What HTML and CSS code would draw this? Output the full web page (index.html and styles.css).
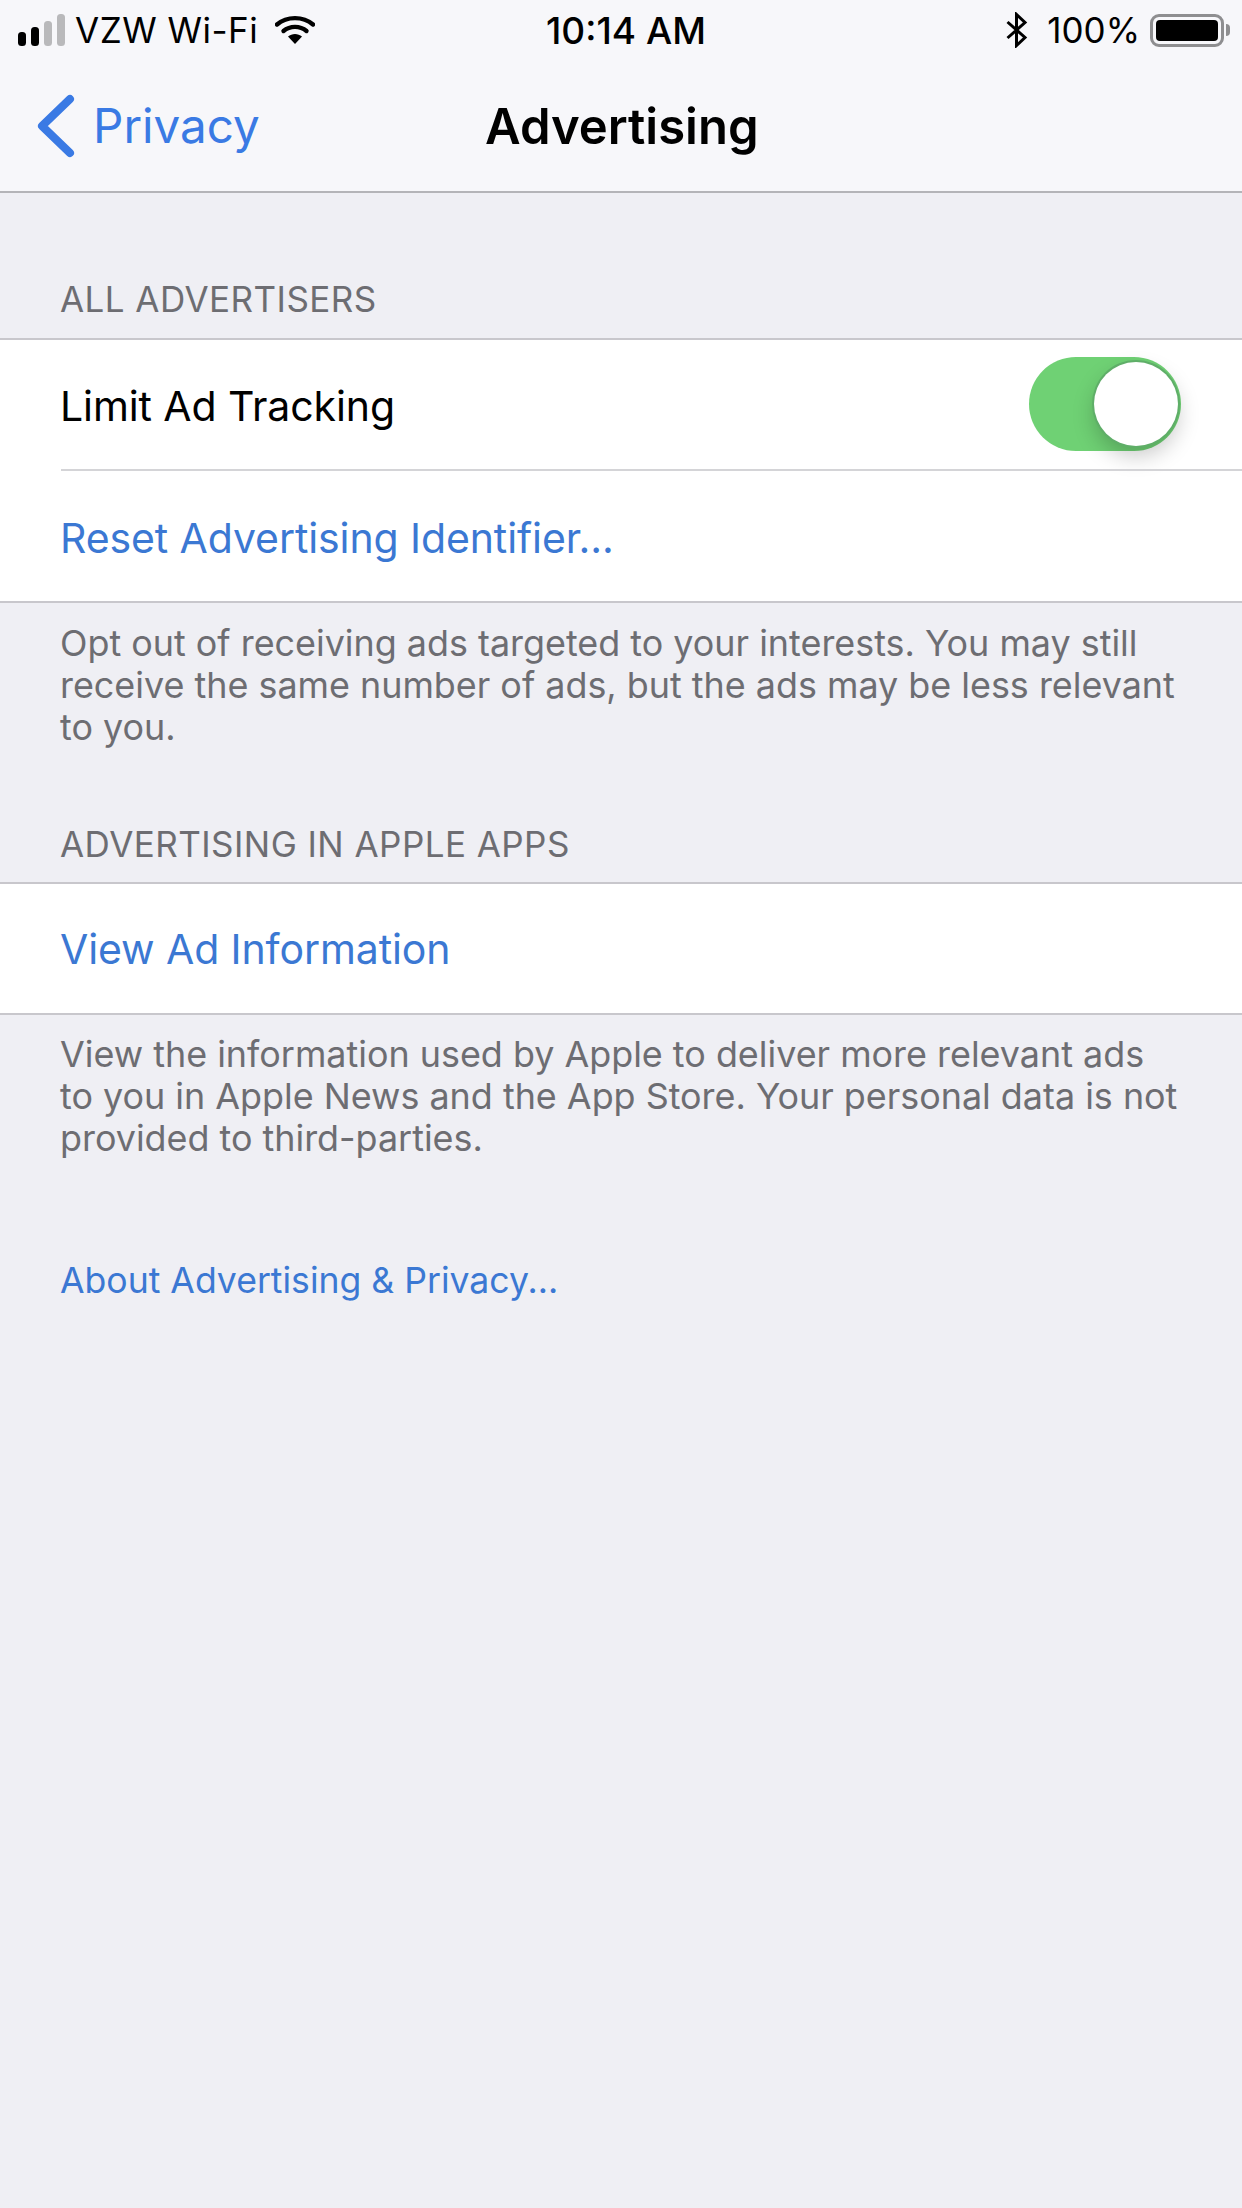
FILE: index.html
```html
<!DOCTYPE html>
<html lang="en">
<head>
<meta charset="utf-8">
<title>Advertising</title>
<link rel="stylesheet" href="styles.css">
</head>
<body>
<div class="phone">
  <header class="topbar">
    <div class="status">
      <div class="status-left">
        <svg class="signal" width="50" height="32" viewBox="0 0 50 32">
          <rect x="0" y="18" width="8" height="14" rx="3.5" fill="#000"/>
          <rect x="13" y="13" width="8" height="19" rx="3.5" fill="#000"/>
          <rect x="26" y="7" width="8" height="25" rx="3.5" fill="#b9b9bb"/>
          <rect x="39" y="0" width="8" height="32" rx="3.5" fill="#b9b9bb"/>
        </svg>
        <span class="carrier">VZW Wi-Fi</span>
        <svg class="wifi" width="40" height="30" viewBox="0 0 40 30">
          <path d="M2 9.500C12 1 28 1 38 9.500" fill="none" stroke="#000" stroke-width="4.400" stroke-linecap="round"/>
          <path d="M8.500 16C15 10.500 25 10.500 31.500 16" fill="none" stroke="#000" stroke-width="4.400" stroke-linecap="round"/>
          <path d="M13 21.500C17 18 23 18 27 21.500L20 29Z" fill="#000"/>
        </svg>
      </div>
      <div class="time">10:14 AM</div>
      <div class="status-right">
        <svg class="bt" width="24" height="36" viewBox="0 0 24 36">
          <path d="M2.500 10L20 25.500L11.500 33.500V2.500L20 10.500L2.500 26" fill="none" stroke="#000" stroke-width="3"/>
        </svg>
        <span class="pct">100%</span>
        <span class="battery"><span class="battery-fill"></span></span>
        <span class="battery-tip"></span>
      </div>
    </div>
    <nav class="navbar">
      <div class="back">
        <svg width="40" height="64" viewBox="0 0 40 64">
          <path d="M34 5L6 32L34 59" fill="none" stroke="#3a7ae4" stroke-width="8" stroke-linecap="round" stroke-linejoin="round"/>
        </svg>
        <span class="back-label">Privacy</span>
      </div>
      <h1 class="title">Advertising</h1>
    </nav>
  </header>
  <main class="content">
    <h2 class="section-head first">ALL ADVERTISERS</h2>
    <section class="group">
      <div class="row row-toggle">
        <span class="row-label">Limit Ad Tracking</span>
        <span class="toggle"><span class="knob"></span></span>
      </div>
      <div class="row link-row"><span class="row-label link">Reset Advertising Identifier...</span></div>
    </section>
    <p class="foot">Opt out of receiving ads targeted to your interests. You may still receive the same number of ads, but the ads may be less relevant to you.</p>
    <h2 class="section-head second">ADVERTISING IN APPLE APPS</h2>
    <section class="group">
      <div class="row view-row"><span class="row-label link">View Ad Information</span></div>
    </section>
    <p class="foot foot-second">View the information used by Apple to deliver more relevant ads to you in Apple News and the App Store. Your personal data is not provided to third-parties.</p>
    <p class="about">About Advertising &amp; Privacy...</p>
  </main>
</div>
</body>
</html>
```
FILE: styles.css
```css
* { box-sizing: border-box; }
html, body { margin: 0; padding: 0; }
body { font-family: Inter, "Liberation Sans", sans-serif; background: #efeff4; color: #000; }
.phone { width: 1242px; height: 2208px; overflow: hidden; background: #efeff4; display: flex; flex-direction: column; }

.topbar { background: #f7f7fa; border-bottom: 2px solid #b4b4b8; height: 193px; }
.status { height: 60px; display: flex; justify-content: space-between; align-items: center; position: relative; padding: 0 12px 0 18px; }
.status-left, .status-right { display: flex; align-items: center; }
.carrier { font-size: 35px; letter-spacing: 0.5px; margin-left: 7px; }
.wifi { margin-left: 17px; }
.time { position: absolute; left: 546px; font-size: 37px; font-weight: 500; }
.bt { margin-right: 18px; }
.pct { font-size: 35px; margin-right: 10px; letter-spacing: 0; }
.battery { width: 74px; height: 33px; border: 3px solid #8e8e90; border-radius: 9px; padding: 3px; display: block; }
.battery-fill { display: block; height: 100%; background: #000; border-radius: 4px; }
.battery-tip { width: 4px; height: 12px; background: #8e8e90; border-radius: 0 4px 4px 0; margin-left: 2px; }

.navbar { height: 131px; display: flex; align-items: center; position: relative; padding-left: 36px; }
.back { display: flex; align-items: center; gap: 17px; color: #3a7ae4; }
.back-label { font-size: 47.6px; }
.title { position: absolute; left: 485px; margin: 0; padding-top: 2px; font-size: 49px; font-weight: 600; }

.section-head { margin: 0; padding-left: 60px; font-size: 35px; font-weight: 400; color: #6d6d72; line-height: 40px; letter-spacing: 0.45px; }
.section-head.first { padding-top: 86px; padding-bottom: 19px; }
.section-head.second { padding-top: 76px; padding-bottom: 18px; }
.group { background: #fff; border-top: 2px solid #c8c7cc; border-bottom: 2px solid #c8c7cc; }
.row { height: 129px; display: flex; align-items: center; padding-left: 60px; }
.row-toggle { justify-content: space-between; padding-right: 61px; }
.row-toggle .row-label { padding-top: 2px; }
.link-row { height: 132px; position: relative; padding-top: 5px; }
.link-row::before { content: ""; position: absolute; left: 61px; right: 0; top: 0; height: 2px; background: #d4d4d7; }
.row-label { font-size: 41px; letter-spacing: -0.1px; }
.link { color: #3b78d3; }
.toggle { width: 152px; height: 94px; border-radius: 47px; background: #6fd174; position: relative; display: block; margin-top: -2px; }
.knob { position: absolute; left: 65px; top: 5px; width: 84px; height: 84px; border-radius: 50%; background: #fff; box-shadow: 0 0 0 2px #5fae68, 0 10px 22px rgba(0,0,0,.22); }

.foot { margin: 0; padding: 19px 60px 0; font-size: 35.9px; line-height: 42px; color: #6d6d72; }
.foot-second { padding-top: 18px; }
.about { margin: 0; padding: 101px 0 0 60px; font-size: 35.6px; line-height: 42px; color: #3b78d3; }
```
